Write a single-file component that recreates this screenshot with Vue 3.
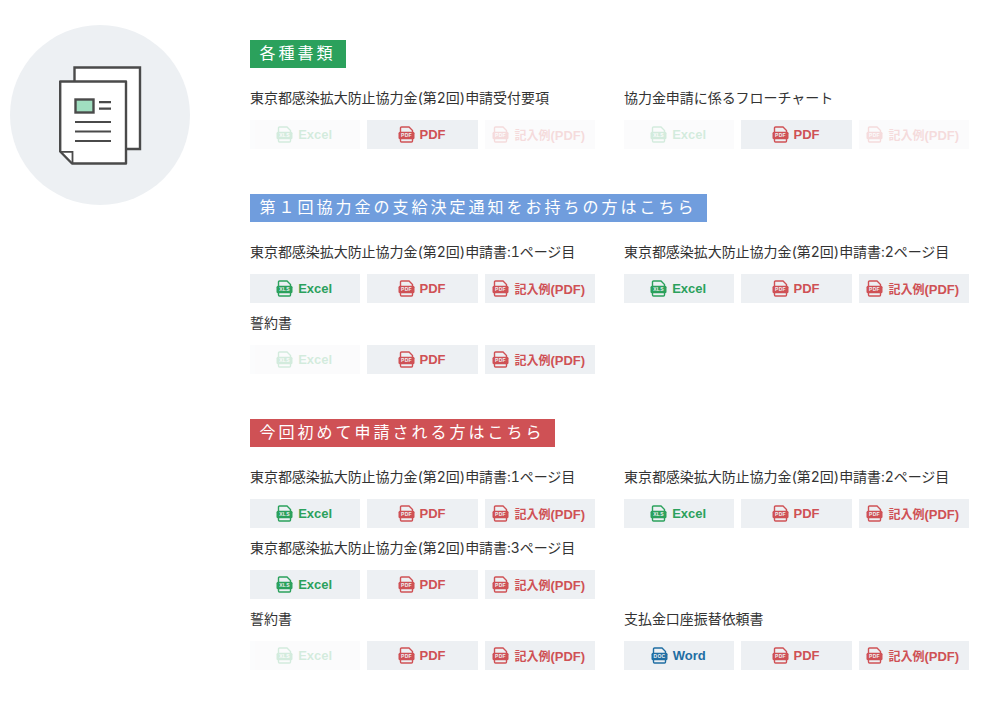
<script setup>
const ex = { kind: 'excel', text: 'Excel', tag: 'XLS' }
const wd = { kind: 'word', text: 'Word', tag: 'DOC' }
const pdf = { kind: 'pdf', text: 'PDF', tag: 'PDF' }
const ei = { kind: 'pdf', pre: '記入例', text: '(PDF)', tag: 'PDF' }
const off = (b) => ({ ...b, off: true })
const T = '東京都感染拡大防止協力金(第2回)'
const sections = [
  {
    title: '各種書類', color: 'green', items: [
      { label: T + '申請受付要項', btns: [off(ex), pdf, off(ei)] },
      { label: '協力金申請に係るフローチャート', btns: [off(ex), pdf, off(ei)] }
    ]
  },
  {
    title: '第１回協力金の支給決定通知をお持ちの方はこちら', color: 'blue', items: [
      { label: T + '申請書:1ページ目', btns: [ex, pdf, ei] },
      { label: T + '申請書:2ページ目', btns: [ex, pdf, ei] },
      { label: '誓約書', btns: [off(ex), pdf, ei] }
    ]
  },
  {
    title: '今回初めて申請される方はこちら', color: 'red', items: [
      { label: T + '申請書:1ページ目', btns: [ex, pdf, ei] },
      { label: T + '申請書:2ページ目', btns: [ex, pdf, ei] },
      { label: T + '申請書:3ページ目', btns: [ex, pdf, ei], full: true },
      { label: '誓約書', btns: [off(ex), pdf, ei] },
      { label: '支払金口座振替依頼書', btns: [wd, pdf, ei] }
    ]
  }
]
</script>

<template>
  <div class="page">
    <div class="hero">
      <svg width="100" height="100" viewBox="50 65 100 100" fill="none">
        <path d="M74.500 81V67.500H140V149H126" fill="#fff" stroke="#4a4a4a" stroke-width="2.400" />
        <path d="M60.200 81.500H126V163.500H72L60.200 151.500z" fill="#fff" stroke="#4a4a4a" stroke-width="2.400" stroke-linejoin="round" />
        <path d="M60.200 151.800H72.500V163.500" stroke="#4a4a4a" stroke-width="1.800" />
        <rect x="75.500" y="99.500" width="18" height="13" fill="#a0dfc0" stroke="#4a4a4a" stroke-width="2.400" />
        <path d="M99 102.200h12M99 108.700h12M75 122h36M75 131.500h36M75 141h36" stroke="#4a4a4a" stroke-width="2.200" />
      </svg>
    </div>
    <main class="content">
      <section v-for="s in sections" :key="s.title" class="section">
        <h2 class="heading" :class="s.color">{{ s.title }}</h2>
        <div class="grid">
          <div v-for="(it, i) in s.items" :key="i" class="item" :class="{ full: it.full }">
            <p class="label">{{ it.label }}</p>
            <div class="btns">
              <a v-for="b in it.btns" :key="(b.pre || '') + b.text" class="btn" :class="[b.kind, { off: b.off }]">
                <svg class="ico" width="17" height="17" viewBox="0 0 17 17" fill="none">
                  <path d="M2.500 7V2Q2.500 1 3.500 1H11L14.500 4.500V7M2.500 13v2q0 1 1 1h10q1 0 1-1v-2" stroke="currentColor" stroke-width="1.400" />
                  <rect x="0.500" y="5.800" width="16" height="7.400" rx="1.500" fill="currentColor" />
                  <text x="8.500" y="11.300" text-anchor="middle" class="tag">{{ b.tag }}</text>
                </svg>
                <span><span v-if="b.pre" class="pre">{{ b.pre }}</span>{{ b.text }}</span>
              </a>
            </div>
          </div>
        </div>
      </section>
    </main>
  </div>
</template>

<style>
html, body { margin: 0; background: #fff; }
</style>

<style scoped>
.page {
  display: flex;
  align-items: flex-start;
  width: 988px;
  height: 703px;
  overflow: hidden;
  padding: 25px 0 0 10px;
  box-sizing: border-box;
  font-family: "Liberation Sans", "Noto Sans CJK JP", sans-serif;
  color: #333;
}
.hero {
  flex: none;
  width: 180px;
  height: 180px;
  border-radius: 50%;
  background: #edf0f3;
  display: flex;
  align-items: center;
  justify-content: center;
  margin-right: 60px;
}
.content {
  width: 719px;
  padding-top: 15px;
}
.section { margin-bottom: 45px; }
.heading {
  display: table;
  margin: 0 0 20px;
  padding: 0 10.500px 0 9.500px;
  height: 28px;
  line-height: 28px;
  font-size: 16px;
  font-weight: 400;
  letter-spacing: 3px;
  color: #fff;
}
.green { background: #2ba15c; }
.blue { background: #709ddd; }
.red { background: #cf5155; }
.grid {
  display: grid;
  grid-template-columns: 345px 345px;
  column-gap: 29px;
  row-gap: 10px;
}
.full { grid-column: 1 / 3; width: 345px; }
.label {
  margin: 0 0 11px;
  font-family: Inter, "Noto Sans CJK JP", sans-serif;
  font-feature-settings: "tnum";
  letter-spacing: -0.050px;
  font-size: 14px;
  line-height: 20px;
  height: 21px;
  white-space: nowrap;
}
.btns {
  display: grid;
  grid-template-columns: repeat(3, 1fr);
  column-gap: 6.900px;
}
.btn {
  height: 29px;
  padding-right: 2px;
  box-sizing: border-box;
  background: #edf0f3;
  display: flex;
  align-items: center;
  justify-content: center;
  gap: 5px;
  font-size: 13px;
  font-weight: 700;
  white-space: nowrap;
}
.btn.off { opacity: 0.2; }
.pre { font-size: 12px; font-weight: 700; }
.excel { color: #2ba15c; }
.pdf { color: #cf5155; }
.word { color: #1f6ea3; }
.ico { flex: none; }
.tag {
  font-family: "Liberation Sans", sans-serif;
  font-size: 5px;
  font-weight: 700;
  letter-spacing: 0.300px;
  fill: #edf0f3;
}
</style>
